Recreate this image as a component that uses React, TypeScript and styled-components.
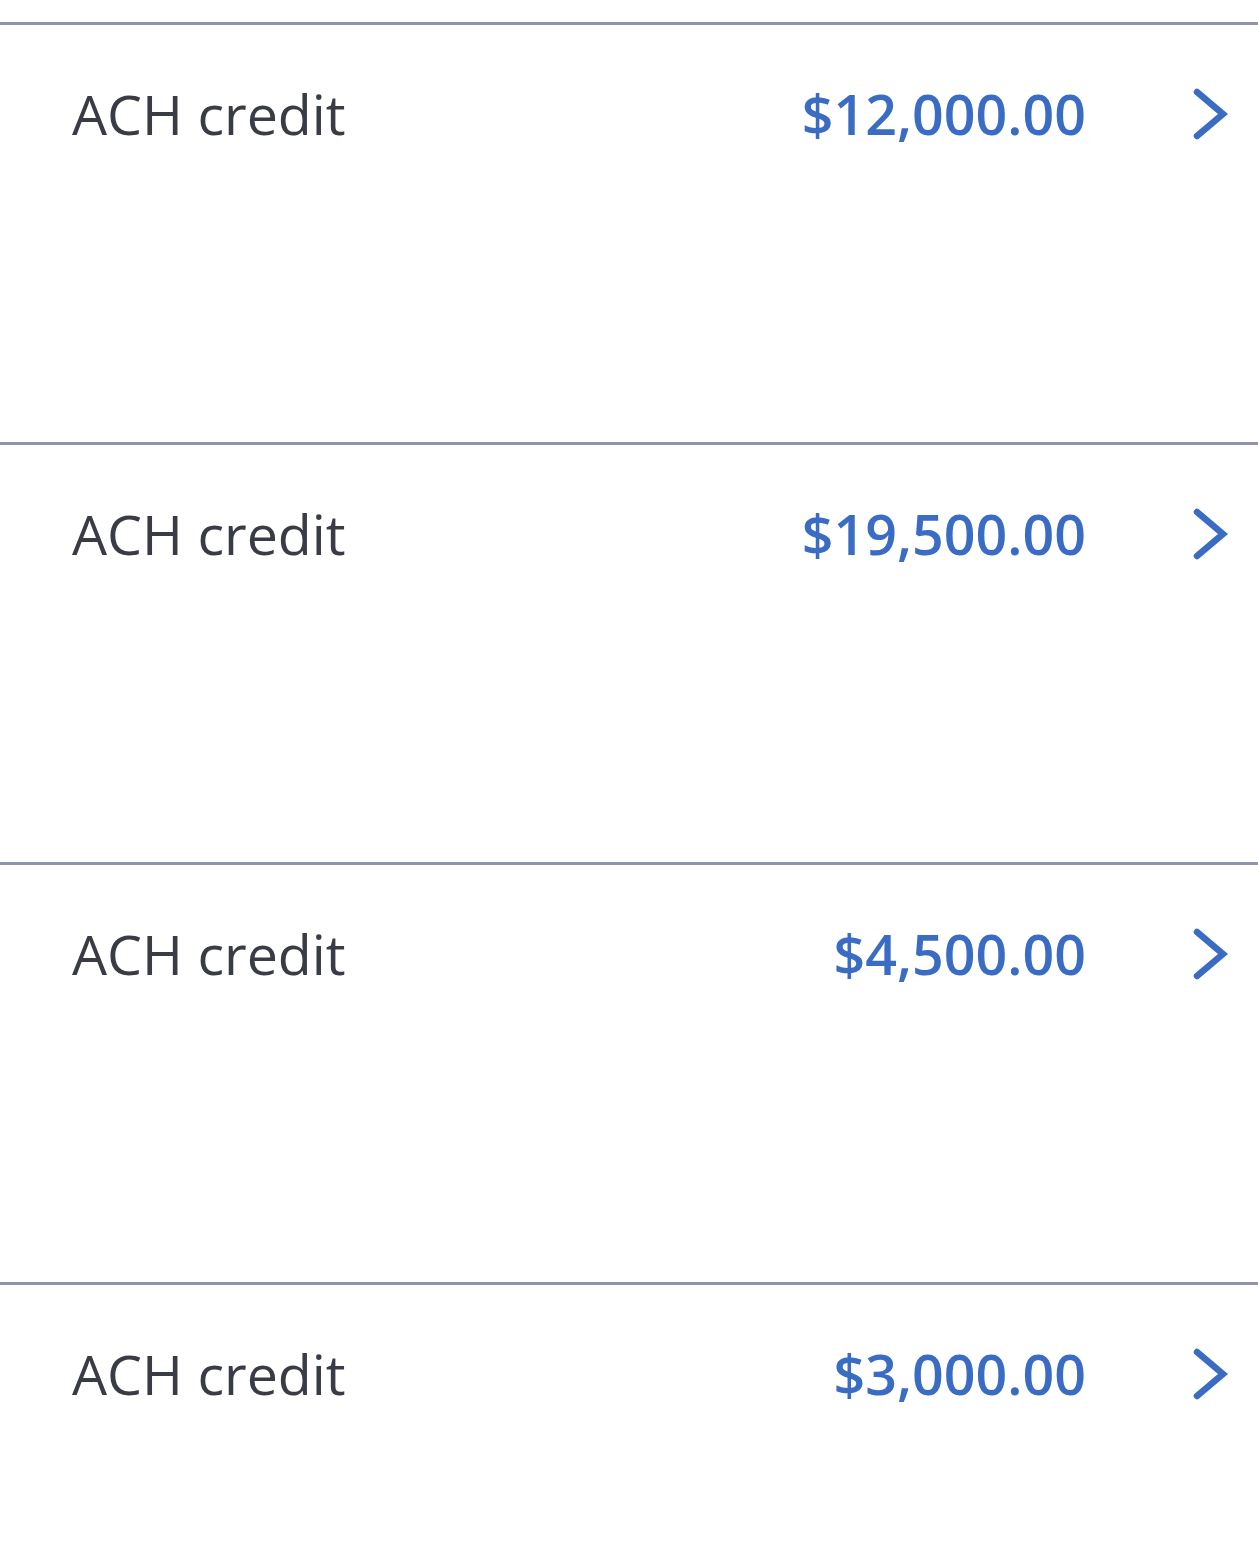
import React from "react";
import styled, { createGlobalStyle } from "styled-components";

const GlobalStyle = createGlobalStyle`
  html, body {
    margin: 0;
    padding: 0;
    background: #ffffff;
    overflow: hidden;
  }
  body {
    font-family: "Open Sans", "Noto Sans", "Liberation Sans", sans-serif;
    -webkit-font-smoothing: antialiased;
  }
`;

const Page = styled.div`
  padding-top: 22px;
  width: 1258px;
  height: 1546px;
  box-sizing: border-box;
  overflow: hidden;
`;

const List = styled.ul`
  list-style: none;
  margin: 0;
  padding: 0;
`;

const Row = styled.li`
  box-sizing: border-box;
  height: 420px;
  border-top: 3px solid #8e95ab;
  padding: 51px 28px 0 72px;
  cursor: pointer;
`;

const RowHead = styled.div`
  display: grid;
  grid-template-columns: 1fr auto 40px;
  column-gap: 104px;
  align-items: center;
  height: 75px;
`;

const Label = styled.span`
  font-size: 55.5px;
  line-height: 75px;
  font-weight: 400;
  color: #393c44;
`;

const Amount = styled.span`
  font-size: 55.5px;
  line-height: 75px;
  font-weight: 600;
  color: #3b6cc3;
  text-align: right;
`;

const Chevron = styled.svg`
  display: block;
  width: 40px;
  height: 56px;
`;

const ChevronIcon = () => (
  <Chevron viewBox="0 0 40 56" aria-hidden="true">
    <path
      d="M7 6 L33 28 L7 50"
      fill="none"
      stroke="#3b6cc3"
      strokeWidth="6.5"
      strokeLinecap="round"
      strokeLinejoin="miter"
    />
  </Chevron>
);

const transactions = [
  { id: 1, type: "ACH credit", amount: "$12,000.00" },
  { id: 2, type: "ACH credit", amount: "$19,500.00" },
  { id: 3, type: "ACH credit", amount: "$4,500.00" },
  { id: 4, type: "ACH credit", amount: "$3,000.00" },
];

export default function App() {
  return (
    <>
      <GlobalStyle />
      <Page>
        <List>
          {transactions.map((t) => (
            <Row key={t.id}>
              <RowHead>
                <Label>{t.type}</Label>
                <Amount>{t.amount}</Amount>
                <ChevronIcon />
              </RowHead>
            </Row>
          ))}
        </List>
      </Page>
    </>
  );
}
